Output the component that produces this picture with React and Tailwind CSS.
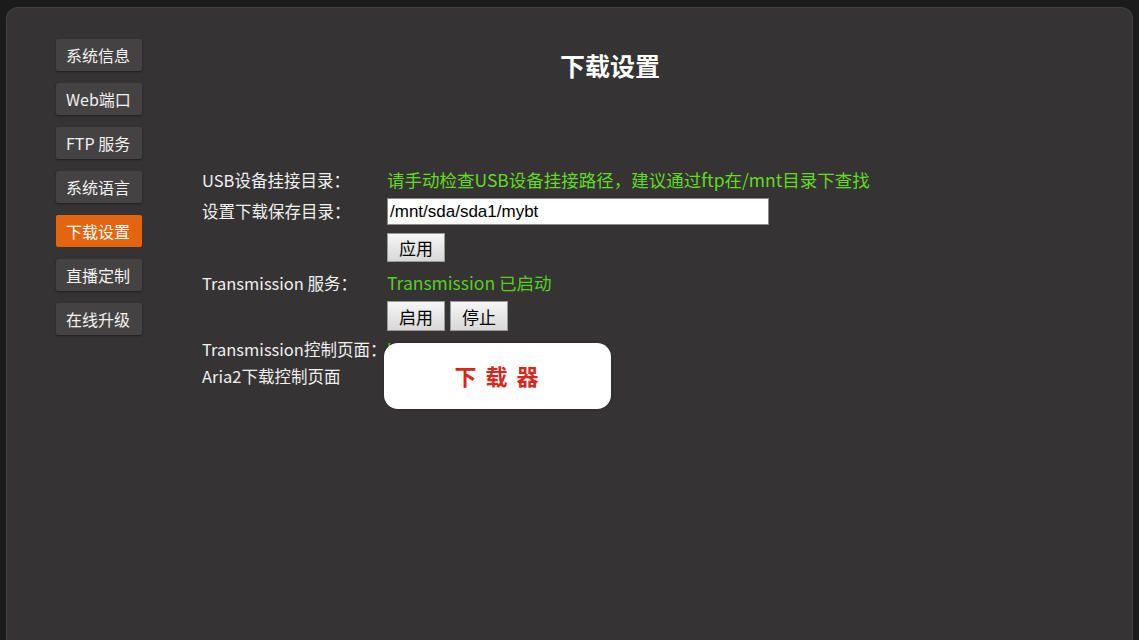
import React from "react";

const menu = ["系统信息", "Web端口", "FTP 服务", "系统语言", "下载设置", "直播定制", "在线升级"];

function GrayButton({ children, tall }) {
  return (
    <button className={(tall ? "h-[30px]" : "h-[29px]") + " w-[58px] text-[17px] leading-none text-black border border-[#9a9a9a] bg-gradient-to-b from-[#f6f6f6] to-[#d8d8d8]"}>
      {children}
    </button>
  );
}

export default function App() {
  const font = { fontFamily: '"Noto Sans CJK SC", "Liberation Sans", sans-serif' };
  return (
    <div className="w-[1139px] h-[640px] overflow-hidden bg-[#1c1b1b] pt-[7px] px-[6px]" style={font}>
      <div className="h-[660px] flex rounded-t-[12px] bg-[#353334] border-t border-x border-[#444243]">
        {/* sidebar */}
        <div className="flex flex-col gap-[12px] pl-[49px] pt-[31px] w-[136px]">
          {menu.map((m) => (
            <div
              key={m}
              className={
                "w-[86px] h-[32px] flex items-center pl-[10px] text-[16px] rounded-[2px] " +
                (m === "下载设置"
                  ? "bg-[#e5640f] text-white"
                  : "bg-[#454243] text-[#f2f2f2] shadow-[0_1px_2px_rgba(0,0,0,0.4)]")
              }
            >
              {m}
            </div>
          ))}
        </div>

        {/* main */}
        <div className="flex-1 pr-[55px]">
          <h1 className="mt-[41px] text-center text-[25px] leading-[32px] font-bold text-white">下载设置</h1>

          <div className="mt-[88px] pl-[59px] text-[16.5px] text-[#f0f0f0]">
            <div className="flex items-center h-[22px]">
              <div className="w-[185px]">USB设备挂接目录：</div>
              <div className="text-[#62dc1e] text-[17.5px]">请手动检查USB设备挂接路径，建议通过ftp在/mnt目录下查找</div>
            </div>

            <div className="flex items-center mt-[7px] h-[27px]">
              <div className="w-[185px]">设置下载保存目录：</div>
              <div className="w-[382px] h-[27px] bg-white border border-[#8a8a8a] flex items-center px-[2px] text-black text-[17px]" style={{ fontFamily: '"Liberation Sans", sans-serif' }}>
                /mnt/sda/sda1/mybt
              </div>
            </div>

            <div className="flex mt-[8px] pl-[185px]">
              <GrayButton>应用</GrayButton>
            </div>

            <div className="flex items-center mt-[10px] h-[22px]">
              <div className="w-[185px]">Transmission 服务：</div>
              <div className="text-[#57d01b] text-[17.5px]">Transmission 已启动</div>
            </div>

            <div className="flex gap-[5px] mt-[7px] pl-[185px]">
              <GrayButton tall>启用</GrayButton>
              <GrayButton tall>停止</GrayButton>
            </div>

            <div className="flex items-center mt-[7px] h-[22px]">
              <div className="w-[185px]">Transmission控制页面：</div>
              <div className="relative text-[#57d01b]">
                http://192.168.1.1:9091/
                <div className="absolute left-[-3px] top-[6px] w-[227px] h-[66px] rounded-[14px] bg-white flex items-center justify-center text-[22px] font-bold text-[#d8261c] tracking-[2px] shadow-[0_0_3px_rgba(0,0,0,0.3)]">
                  下 载 器
                </div>
              </div>
            </div>

            <div className="flex items-center mt-[5px] h-[22px]">
              <div className="w-[185px]">Aria2下载控制页面</div>
            </div>
          </div>
        </div>
      </div>
    </div>
  );
}
